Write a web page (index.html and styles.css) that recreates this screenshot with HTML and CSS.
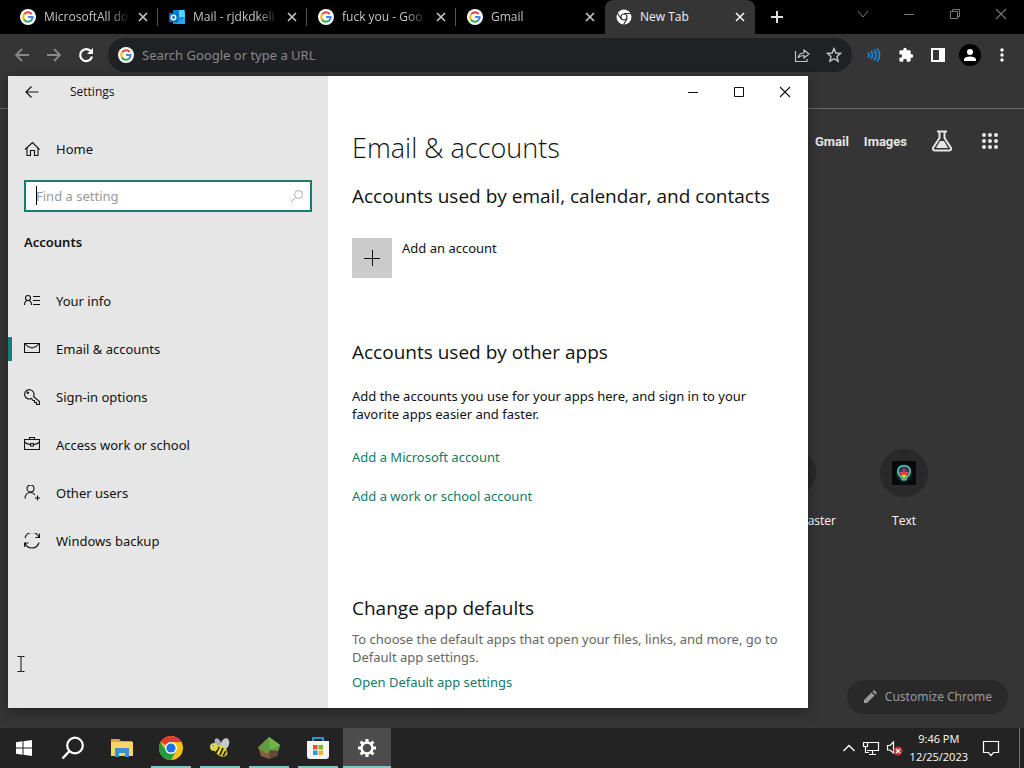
FILE: index.html
```html
<!DOCTYPE html>
<html lang="en">
<head>
<meta charset="UTF-8">
<title>Settings</title>
<link rel="stylesheet" href="styles.css">
</head>
<body>

<!-- shared icons -->
<svg class="defs" aria-hidden="true">
  <symbol id="google" viewBox="0 0 16 16">
    <circle cx="8" cy="8" r="8" fill="#fff"/>
    <path d="M4.2 5.3A4.6 4.6 0 0 1 11.6 5.1" fill="none" stroke="#ea4335" stroke-width="2"/>
    <path d="M4.2 5.2A4.8 4.8 0 0 0 4.2 10.8" fill="none" stroke="#fbbc05" stroke-width="2"/>
    <path d="M4.1 10.6A4.7 4.7 0 0 0 11.2 11.5" fill="none" stroke="#34a853" stroke-width="2"/>
    <path d="M8 8H12.6A4.7 4.7 0 0 1 11 11.7" fill="none" stroke="#4285f4" stroke-width="2"/>
  </symbol>
  <symbol id="close" viewBox="0 0 10 10">
    <path d="M1 1L9 9M9 1L1 9" fill="none" stroke="currentColor" stroke-width="1.7"/>
  </symbol>
  <symbol id="win-close" viewBox="0 0 12 12">
    <path d="M1 1L11 11M11 1L1 11" fill="none" stroke="currentColor" stroke-width="1.1"/>
  </symbol>
</svg>

<div class="browser">
  <div class="tabs">
    <div class="tab">
      <svg class="fav"><use href="#google"/></svg>
      <span class="tab-title">MicrosoftAll do</span>
      <button class="tab-close" aria-label="Close tab"><svg><use href="#close"/></svg></button>
    </div>
    <div class="tab">
      <svg class="fav" viewBox="0 0 16 16">
        <rect x="4" y="1" width="12" height="14" rx="1" fill="#28a8ea"/>
        <path d="M4 1H10V8H4Z" fill="#0078d4"/><path d="M10 1H15L16 8H10Z" fill="#50d9ff"/>
        <path d="M4 8H16V15H4Z" fill="#1490df"/><path d="M7 15L16 8V15Z" fill="#28a8ea"/>
        <rect x="0" y="4" width="9" height="9" rx="1" fill="#0f6cbd"/>
        <circle cx="4.5" cy="8.5" r="2.2" fill="none" stroke="#fff" stroke-width="1.5"/>
      </svg>
      <span class="tab-title">Mail - rjdkdkeli</span>
      <button class="tab-close" aria-label="Close tab"><svg><use href="#close"/></svg></button>
    </div>
    <div class="tab">
      <svg class="fav"><use href="#google"/></svg>
      <span class="tab-title">fuck you - Goo</span>
      <button class="tab-close" aria-label="Close tab"><svg><use href="#close"/></svg></button>
    </div>
    <div class="tab last">
      <svg class="fav"><use href="#google"/></svg>
      <span class="tab-title">Gmail</span>
      <button class="tab-close" aria-label="Close tab"><svg><use href="#close"/></svg></button>
    </div>
    <div class="tab active">
      <svg class="fav" viewBox="0 0 16 16">
        <circle cx="8" cy="8" r="7.5" fill="#fff"/>
        <circle cx="8" cy="8" r="3.6" fill="#353535"/>
        <circle cx="8" cy="8" r="2.4" fill="#fff"/>
        <path d="M8 4.5H15M5 9.8L1.4 4M11 9.8L7.6 15.5" stroke="#353535" stroke-width="1.2"/>
      </svg>
      <span class="tab-title">New Tab</span>
      <button class="tab-close" aria-label="Close tab"><svg><use href="#close"/></svg></button>
    </div>
    <button class="new-tab" aria-label="New tab">
      <svg width="12" height="12" viewBox="0 0 12 12"><path d="M6 0V12M0 6H12" stroke="currentColor" stroke-width="2"/></svg>
    </button>
    <div class="win-buttons dim">
      <button aria-label="Search tabs"><svg width="12" height="12" viewBox="0 0 12 12"><path d="M1 3L6 9L11 3" fill="none" stroke="currentColor"/></svg></button>
      <button aria-label="Minimize"><svg width="12" height="12" viewBox="0 0 12 12"><path d="M1 6.5H11" stroke="currentColor"/></svg></button>
      <button aria-label="Restore"><svg width="12" height="12" viewBox="0 0 12 12"><path d="M1.500 3.500H8.500V10.500H1.500ZM3.500 3V1.500H10.500V8.500H9" fill="none" stroke="currentColor"/></svg></button>
      <button aria-label="Close"><svg width="12" height="12"><use href="#win-close"/></svg></button>
    </div>
  </div>

  <div class="toolbar">
    <button class="grey" aria-label="Back"><svg width="16" height="16" viewBox="0 0 16 16"><path d="M15 8H2M8 2L2 8L8 14" fill="none" stroke="currentColor" stroke-width="1.8"/></svg></button>
    <button class="grey" aria-label="Forward"><svg width="16" height="16" viewBox="0 0 16 16"><path d="M1 8H14M8 2L14 8L8 14" fill="none" stroke="currentColor" stroke-width="1.8"/></svg></button>
    <button aria-label="Reload"><svg width="16" height="16" viewBox="0 0 16 16"><path d="M13 4.500A6 6 0 1 0 14 9.500" fill="none" stroke="currentColor" stroke-width="2.200"/><path d="M15 1V7H9Z" fill="currentColor"/></svg></button>
    <div class="omnibox">
      <svg class="fav"><use href="#google"/></svg>
      <input type="text" aria-label="Address" placeholder="Search Google or type a URL">
      <button aria-label="Share"><svg width="16" height="16" viewBox="0 0 16 16"><path d="M1.500 4V14.500H13V12M4 11Q5 6 10 6V3L15 7L10 11V8.500Q6 8.500 4 11Z" fill="none" stroke="currentColor" stroke-width="1.200"/></svg></button>
      <button aria-label="Bookmark"><svg width="16" height="16" viewBox="0 0 16 16"><path d="M8 1.600L9.900 6L14.600 6.400L11 9.500L12.100 14.200L8 11.700L3.900 14.200L5 9.500L1.400 6.400L6.100 6Z" fill="none" stroke="currentColor" stroke-width="1.400"/></svg></button>
    </div>
    <div class="extensions">
      <button class="blue" aria-label="Audio extension"><svg width="16" height="16" viewBox="0 0 16 16"><path d="M2 5.500Q4 8 2 10.500M5 4Q8 8 5 12M8 2.500Q12 8 8 13.500M11 1.500Q16 8 11 14.500" fill="none" stroke="currentColor" stroke-width="1.900"/></svg></button>
      <button aria-label="Extensions"><svg width="16" height="16" viewBox="0 0 24 24"><path d="M20.500 11H19V7c0-1.100-.9-2-2-2h-4V3.500a2.500 2.500 0 0 0-5 0V5H4c-1.100 0-2 .9-2 2v3.800h1.500a2.700 2.700 0 0 1 0 5.400H2V20c0 1.100.9 2 2 2h3.800v-1.500a2.700 2.700 0 0 1 5.400 0V22H17c1.100 0 2-.9 2-2v-4h1.500a2.500 2.500 0 0 0 0-5z" fill="currentColor"/></svg></button>
      <button aria-label="Side panel"><svg width="16" height="16" viewBox="0 0 16 16"><path d="M1 1H15V15H1ZM3 3V13H9V3Z" fill="currentColor" fill-rule="evenodd"/></svg></button>
      <button aria-label="Profile"><svg width="22" height="22" viewBox="0 0 22 22"><circle cx="11" cy="11" r="11"/><circle cx="11" cy="8" r="3" fill="currentColor"/><path d="M5 17V15Q6 12.500 11 12.500T17 15V17Z" fill="currentColor"/></svg></button>
      <button aria-label="Menu"><svg width="16" height="16" viewBox="0 0 16 16" fill="currentColor"><circle cx="8" cy="3" r="1.700"/><circle cx="8" cy="8" r="1.700"/><circle cx="8" cy="13" r="1.700"/></svg></button>
    </div>
  </div>
  <div class="bookmarks"></div>

  <div class="page">
    <div class="page-links">
      <a href="#">Gmail</a>
      <a href="#">Images</a>
      <button aria-label="Search Labs"><svg width="22" height="22" viewBox="0 0 22 22"><path d="M6 1.500H16M8.500 2V8L2 18Q1.500 20.500 4 20.500H18Q20.500 20.500 20 18L13.500 8V2" fill="none" stroke="currentColor" stroke-width="2"/><path d="M9 11H13L17 18H5Z" fill="currentColor"/></svg></button>
      <button aria-label="Google apps"><svg width="18" height="18" viewBox="0 0 18 18" fill="currentColor"><circle cx="3" cy="3" r="2"/><circle cx="9" cy="3" r="2"/><circle cx="15" cy="3" r="2"/><circle cx="3" cy="9" r="2"/><circle cx="9" cy="9" r="2"/><circle cx="15" cy="9" r="2"/><circle cx="3" cy="15" r="2"/><circle cx="9" cy="15" r="2"/><circle cx="15" cy="15" r="2"/></svg></button>
    </div>
    <div class="shortcuts">
      <a class="shortcut cut" href="#"><span class="disc"></span>aster</a>
      <a class="shortcut" href="#">
        <span class="disc"><svg width="24" height="24" viewBox="0 0 24 24"><rect width="24" height="24" fill="#07090d"/><ellipse cx="12" cy="12" rx="8" ry="9" fill="#0b302c"/><path d="M6 10Q6 5 12 5T18 10Q18 14 15 16Q14 19 12 19T9 16Q6 14 6 10Z" fill="#35242f" stroke="#53d6bd" stroke-width="1.500"/><path d="M7 11H17L15 14H9Z" fill="#e8442f"/><path d="M9 14H15L12 18Z" fill="#d8dd3f"/><path d="M8 9Q12 5 16 9V11H8Z" fill="#35408e"/><path d="M12 7V13" stroke="#e33c42" stroke-width="1.500"/></svg></span>
        Text
      </a>
    </div>
    <button class="customize"><svg width="14" height="14" viewBox="0 0 14 14"><path d="M1 10L8.500 2.500L11.500 5.500L4 13H1ZM9.500 1.500L10.500 .5Q11 0 11.500 .5L13.500 2.500Q14 3 13.500 3.500L12.500 4.500Z" fill="currentColor"/></svg>Customize Chrome</button>
  </div>
</div>

<div class="settings">
  <aside class="side">
    <div class="title-bar">
      <button class="back" aria-label="Back"><svg width="14" height="14" viewBox="0 0 14 14"><path d="M13.500 7H1M6.500 1.500L1 7L6.500 12.500" fill="none" stroke="currentColor" stroke-width="1.200"/></svg></button>
      <span>Settings</span>
    </div>
    <a class="item home" href="#">
      <svg viewBox="0 0 16 16"><path d="M1 8.500L8.500 1.500L15.500 8.500M3 7V14.500H6.500V9.500H10.500V14.500H14V7"/></svg>
      Home
    </a>
    <div class="search">
      <input type="text" aria-label="Find a setting" placeholder="Find a setting">
      <svg width="14" height="14" viewBox="0 0 14 14"><circle cx="8.500" cy="5.500" r="4"/><path d="M5.500 8.500L1 13"/></svg>
      <span class="caret"></span>
    </div>
    <h2 class="side-title">Accounts</h2>
    <nav>
      <a class="item" href="#"><svg viewBox="0 0 16 16"><circle cx="4" cy="5" r="2.500"/><path d="M.5 12Q.5 7.500 4 7.500T7.500 12M9 3.500H16M9 7.500H16M9 11.500H16"/></svg>Your info</a>
      <a class="item current" href="#"><svg viewBox="0 0 16 16"><path d="M.5 2.500H15.500V11.500H.5ZM1 3Q4 6.500 8 7Q12 6.500 15 3"/></svg>Email &amp; accounts</a>
      <a class="item" href="#"><svg viewBox="0 0 16 16"><path d="M9.500 7.500L15.500 12.500V15.500H12.500V13.500H10.500V11.500H9L7.500 9.500A4.700 4.700 0 1 1 9.500 7.500Z"/><circle cx="3.800" cy="3.800" r=".7"/></svg>Sign-in options</a>
      <a class="item" href="#"><svg viewBox="0 0 16 16"><path d="M.5 2.500H15.500V12.500H.5ZM5.500 2.500V.5H10.500V2.500M.5 5Q3 7.500 6.500 7.500M9.500 7.500Q13 7.500 15.500 5M6.500 6.500H9.500V9H6.500Z"/></svg>Access work or school</a>
      <a class="item" href="#"><svg viewBox="0 0 16 16"><circle cx="6.500" cy="3.500" r="3.500"/><path d="M1 13.500Q1.500 7.500 6.500 7.500Q9.500 7.500 11 10M13.500 10.500V15.500M11 13H16"/></svg>Other users</a>
      <a class="item" href="#"><svg viewBox="0 0 16 16"><path d="M1 5A7.300 7.300 0 0 1 15 4.500M15.500 .5V4.500H11.500M15 9.500A7.300 7.300 0 0 1 1 10M.5 14V10H4.500"/></svg>Windows backup</a>
    </nav>
  </aside>

  <main class="content">
    <div class="win-buttons">
      <button aria-label="Minimize"><svg width="12" height="12" viewBox="0 0 12 12"><path d="M1 6.500H11" stroke="currentColor"/></svg></button>
      <button aria-label="Maximize"><svg width="12" height="12" viewBox="0 0 12 12"><path d="M1.500 1.500H10.500V10.500H1.500Z" fill="none" stroke="currentColor"/></svg></button>
      <button aria-label="Close"><svg width="12" height="12"><use href="#win-close"/></svg></button>
    </div>
    <div class="content-body">
      <h1>Email &amp; accounts</h1>
      <h2>Accounts used by email, calendar, and contacts</h2>
      <button class="add">
        <span class="plus"><svg width="16" height="16" viewBox="0 0 16 16"><path d="M8.500 0V16M0 8.500H16" stroke="currentColor"/></svg></span>
        <span>Add an account</span>
      </button>
      <section class="apps">
        <h2>Accounts used by other apps</h2>
        <p>Add the accounts you use for your apps here, and sign in to your favorite apps easier and faster.</p>
        <a href="#">Add a Microsoft account</a>
        <a href="#">Add a work or school account</a>
      </section>
      <section class="defaults">
        <h2>Change app defaults</h2>
        <p>To choose the default apps that open your files, links, and more, go to Default app settings.</p>
        <a href="#">Open Default app settings</a>
      </section>
    </div>
  </main>

  <svg class="pointer" width="8" height="16" viewBox="0 0 8 16"><path d="M.5 .5H3L4 1L5 .5H7.500M4 1V15M.5 15.500H3L4 15L5 15.500H7.500" fill="none" stroke="#111"/></svg>
</div>

<div class="taskbar">
  <button aria-label="Start"><svg width="16" height="16" viewBox="0 0 16 16"><path d="M0 2.200L6.500 1.300V7.500H0ZM7.500 1.200L16 0V7.500H7.500ZM0 8.500H6.500V14.700L0 13.800ZM7.500 8.500H16V16L7.500 14.800Z" fill="#fff"/></svg></button>
  <button aria-label="Search"><svg width="24" height="24" viewBox="0 0 24 24"><circle cx="14" cy="9.500" r="7.800" fill="none" stroke="#fff" stroke-width="2.200"/><path d="M8.500 15L1.500 22.500" stroke="#fff" stroke-width="2.500"/></svg></button>
  <button aria-label="File Explorer"><svg width="24" height="24" viewBox="0 0 24 24"><path d="M1 3H9L11 5H22V20H1Z" fill="#e8a33d"/><path d="M1 6H23V20H1Z" fill="#fbd367"/><path d="M5 12H19V21H15V17H9V21H5Z" fill="#3f8fd0"/></svg></button>
  <button class="open" aria-label="Chrome"><svg width="24" height="24" viewBox="0 0 24 24"><circle cx="12" cy="12" r="12" fill="#fbc116"/><path d="M12 12L1.600 6A12 12 0 0 1 22.400 6H12Z" fill="#e33b2e"/><path d="M1.600 6A12 12 0 0 0 12 24L17.200 15L12 12H5Z" fill="#249a41"/><circle cx="12" cy="12" r="6" fill="#fff"/><circle cx="12" cy="12" r="4.600" fill="#1a73e8"/></svg></button>
  <button class="open" aria-label="Bee"><svg width="22" height="20" viewBox="0 0 22 20"><ellipse cx="9" cy="5" rx="3" ry="5" transform="rotate(-25 9 5)" fill="#a9afba"/><ellipse cx="16" cy="6" rx="4" ry="6" transform="rotate(20 16 6)" fill="#c4c9d2"/><ellipse cx="12" cy="13" rx="7" ry="5" transform="rotate(35 12 13)" fill="#e5d52d"/><path d="M10 9L7 15M14 10L11 17M17 13L14 18" stroke="#292714" stroke-width="1.800"/><circle cx="5" cy="9" r="4" fill="#d8d447"/><circle cx="4" cy="8" r="1.600" fill="#fff"/><circle cx="4" cy="8" r=".8" fill="#222"/></svg></button>
  <button class="open" aria-label="Minetest"><svg width="24" height="24" viewBox="0 0 24 24"><path d="M12 1L23 9L20 20L12 23L4 20L1 11Z" fill="#8b5c42"/><path d="M12 1L23 9L21 15L13 14L10 18L1 12Z" fill="#5f9d40"/><path d="M12 1L23 9L13 14Z" fill="#72b64b"/><path d="M13 14L21 15L20 20L12 23Z" fill="#61483b"/></svg></button>
  <button class="open" aria-label="Microsoft Store"><svg width="24" height="24" viewBox="0 0 24 24"><path d="M7 6V2H17V6" fill="none" stroke="#2e91d0" stroke-width="2"/><path d="M1 5H23V20Q23 23 20 23H4Q1 23 1 20Z" fill="#f4f4f4"/><path d="M7 9H11.500V13.500H7Z" fill="#e8502b"/><path d="M12.500 9H17V13.500H12.500Z" fill="#7db82c"/><path d="M7 14.500H11.500V19H7Z" fill="#239bd8"/><path d="M12.500 14.500H17V19H12.500Z" fill="#f3b51b"/></svg></button>
  <button class="open front" aria-label="Settings"><svg width="20" height="20" viewBox="0 0 20 20"><circle cx="10" cy="10" r="5.500" fill="none" stroke="#fff" stroke-width="2.400"/><path d="M10 1V4M10 16V19M1 10H4M16 10H19M3.600 3.600L5.800 5.800M14.200 14.200L16.400 16.400M16.400 3.600L14.200 5.800M5.800 14.200L3.600 16.400" stroke="#fff" stroke-width="3"/></svg></button>

  <div class="tray">
    <svg width="14" height="14" viewBox="0 0 14 14"><path d="M1.500 10L7 4.500L12.500 10" fill="none" stroke="#fff" stroke-width="1.300"/></svg>
    <svg width="18" height="16" viewBox="0 0 18 16"><path d="M5 2.500H16.500V10.500H5M10.500 11V14M7 14.500H14M1.500 2.500H5.500V6.500H1.500ZM3.500 7V12.500H7" fill="none" stroke="#fff" stroke-width="1.200"/></svg>
    <svg width="18" height="16" viewBox="0 0 18 16"><path d="M1.500 5.500H4L7.500 2V13L4 10H1.500Z" fill="none" stroke="#fff" stroke-width="1.200"/><circle cx="12" cy="11" r="4.500" fill="#c8323c"/><path d="M10 9L14 13M14 9L10 13" stroke="#fff" stroke-width="1.200"/></svg>
    <div class="clock">9:46 PM<br>12/25/2023</div>
    <svg width="18" height="18" viewBox="0 0 18 18"><path d="M1.500 2.500H16.500V13.500H11.500L9 16.500L6.500 13.500H1.500Z" fill="none" stroke="#fff" stroke-width="1.200"/></svg>
  </div>
  <button class="show-desktop" aria-label="Show desktop"></button>
</div>

</body>
</html>
```

FILE: styles.css
```css
* { box-sizing: border-box; }
body { margin: 0; height: 100vh; display: flex; flex-direction: column; overflow: hidden; position: relative; background: #353535; font-family: "Noto Sans", "Open Sans", sans-serif; font-size: 13px; line-height: 18px; }
button { border: 0; padding: 0; background: none; color: inherit; font: inherit; display: flex; align-items: center; justify-content: center; }
input { border: 0; outline: 0; background: none; font: inherit; color: inherit; padding: 0; min-width: 0; }
a { text-decoration: none; color: inherit; }
h1, h2, p { margin: 0; }
svg { flex: none; display: block; }
.defs { position: absolute; width: 0; height: 0; }

/* browser */
.browser { flex: 1; display: flex; flex-direction: column; color: #fff; min-height: 0; }
.tabs { display: flex; height: 34px; background: #000; padding-left: 9px; font-family: "Open Sans", sans-serif; font-size: 12px; }
.tab { flex: 0 1 149px; display: flex; align-items: center; gap: 8px; padding: 0 10px 0 11px; color: #c4c4c4; min-width: 0; background: linear-gradient(#555, #555) right center / 1px 18px no-repeat; }
.tab.last { background: none; }
.tab.active { flex-basis: 150px; background: #353535; border-radius: 8px 8px 0 0; color: #f0f0f0; }
.fav { width: 16px; height: 16px; }
.tab-title { flex: 1; white-space: nowrap; -webkit-mask-image: linear-gradient(to right, #000 75%, transparent); mask-image: linear-gradient(to right, #000 75%, transparent); }
.tab.active .tab-title { -webkit-mask-image: none; mask-image: none; }
.tab-close svg { width: 10px; height: 10px; }
.new-tab { width: 44px; color: #ddd; }
.win-buttons { display: flex; justify-content: flex-end; height: 32px; }
.win-buttons button { width: 46px; }
.dim { margin-left: auto; height: 28px; color: #777; }

.toolbar { display: flex; align-items: center; height: 42px; padding: 0 6px; }
.toolbar > button { width: 32px; height: 32px; }
.toolbar .grey { color: #888; }
.omnibox { flex: 1; display: flex; align-items: center; gap: 8px; height: 34px; margin-left: 6px; padding: 0 6px 0 10px; border-radius: 17px; background: #202124; color: #c4c4c4; }
.omnibox input { flex: 1; }
.omnibox input::placeholder { color: #898989; opacity: 1; }
.omnibox button { width: 24px; height: 24px; }
.extensions { display: flex; margin-left: 6px; }
.extensions button { width: 32px; height: 32px; }
.extensions .blue { color: #1c7fd6; }
.bookmarks { height: 33px; border-bottom: 1px solid #666; }

.page { flex: 1; display: flex; flex-direction: column; align-items: flex-end; position: relative; }
.page-links { display: flex; align-items: center; gap: 15px; height: 64px; padding-right: 25px; font: bold 13px Roboto, Arial, sans-serif; color: #e6e6e6; }
.page-links button { margin-left: 8px; width: 24px; }
.page-links button + button { margin-left: 12px; width: 18px; }
.shortcuts { display: flex; margin-top: 276px; padding-right: 64px; font-family: "Open Sans", sans-serif; font-size: 12px; }
.shortcut { width: 112px; display: flex; flex-direction: column; align-items: center; gap: 15px; }
.shortcut.cut { align-items: flex-end; padding-right: 12px; }
.shortcut.cut .disc { margin-right: 20px; }
.disc { width: 48px; height: 48px; border-radius: 50%; background: #292929; display: flex; align-items: center; justify-content: center; }
.customize { gap: 8px; height: 34px; padding: 0 16px; margin: auto 16px 14px 0; border-radius: 17px; background: #292929; color: #9b9b9b; font-size: 12px; }

/* settings window */
.settings { position: absolute; top: 76px; left: 8px; right: 216px; bottom: 60px; display: flex; background: #fff; color: #111; box-shadow: 0 3px 12px rgba(0, 0, 0, .4); }
.side { flex: 0 0 320px; background: #e6e6e6; }
.title-bar { display: flex; align-items: center; height: 32px; font-family: "Open Sans", sans-serif; font-size: 12px; gap: 14px; }
.back { width: 48px; height: 32px; }
.item { display: flex; align-items: center; gap: 16px; height: 48px; padding-left: 16px; }
.item svg { width: 16px; height: 16px; fill: none; stroke: #111; stroke-width: 1.1; }
.item.current { background: linear-gradient(#128078, #128078) left center / 4px 24px no-repeat; }
.home { height: 40px; margin-top: 21px; }
.search { position: relative; display: flex; align-items: center; height: 32px; margin: 11px 16px 0; padding: 0 6px 0 10px; border: 2px solid #1b7d70; background: #fff; }
.search input { flex: 1; }
.search input::placeholder { color: #999; opacity: 1; }
.search svg { fill: none; stroke: #aaa; }
.caret { position: absolute; left: 10px; top: 4px; width: 1px; height: 19px; background: #000; }
.side-title { margin: 20px 16px 25px; font-size: 13px; line-height: 20px; font-weight: 600; }
.content { flex: 1; min-width: 0; }
.content-body { padding: 22px 16px 0 24px; }
h1 { font-family: "Open Sans", sans-serif; font-size: 27px; line-height: 36px; font-weight: 300; }
.content h2 { font-family: "Open Sans", sans-serif; font-size: 19px; line-height: 28px; font-weight: 400; }
h1 + h2 { margin-top: 16px; }
.add { align-items: flex-start; gap: 10px; margin-top: 28px; line-height: 20px; }
.plus { width: 40px; height: 40px; background: #ccc; display: flex; align-items: center; justify-content: center; }
.content section a { display: block; width: fit-content; color: #117b67; }
.apps { margin-top: 60px; }
.apps p { margin: 21px 0 25px; }
.apps a + a { margin-top: 21px; }
.defaults { margin-top: 89px; }
.defaults p { margin: 8px 0 7px; color: #666; }
.pointer { position: absolute; left: 9px; bottom: 36px; }

/* taskbar */
.taskbar { display: flex; gap: 1px; height: 40px; background: #232323; color: #fff; }
.taskbar > button { width: 48px; }
.open { background: linear-gradient(#7cc7c9, #7cc7c9) center bottom / 40px 2px no-repeat; }
.open.front { background: linear-gradient(#7cc7c9, #7cc7c9) center bottom / 48px 2px no-repeat #4c4c4c; }
.tray { margin-left: auto; display: flex; align-items: center; gap: 6px; padding-right: 18px; }
.clock { font-family: "Open Sans", sans-serif; font-size: 11px; text-align: center; }
.tray .clock + svg { margin-left: 8px; }
.taskbar .show-desktop { width: 5px; border-left: 1px solid #777; }
```
